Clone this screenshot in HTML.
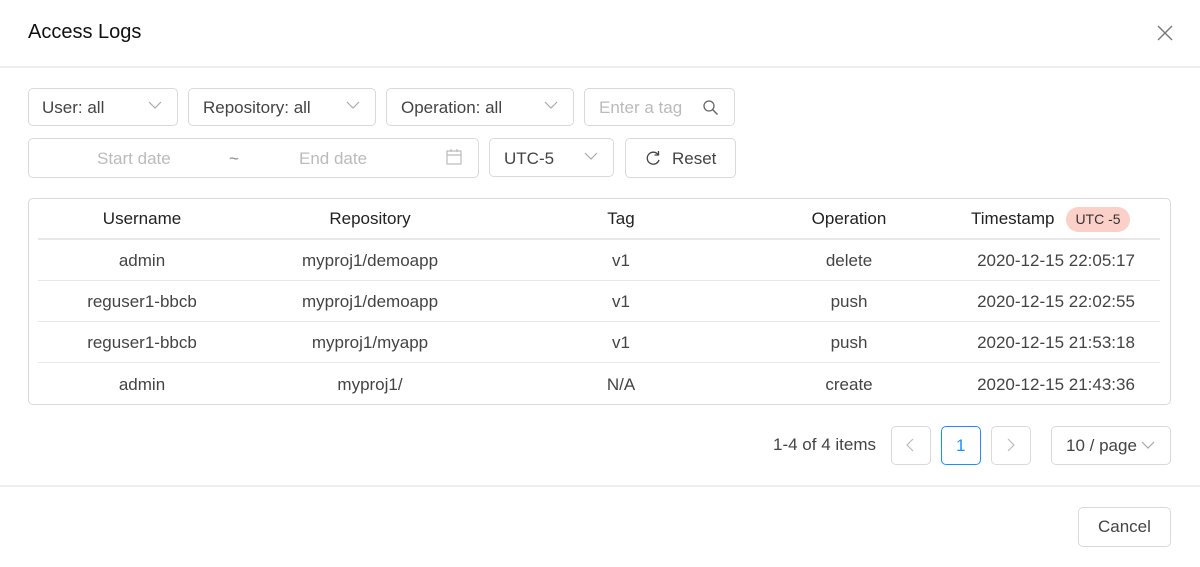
<!DOCTYPE html>
<html><head><meta charset="utf-8"><style>
*{box-sizing:border-box;margin:0;padding:0}
body{width:1200px;height:567px;background:#fff;font-family:"Liberation Sans",Roboto,sans-serif;position:relative;overflow:hidden;color:#444}
.a{position:absolute}
.box{position:absolute;border:1px solid #d9d9d9;border-radius:5px;background:#fff}
.t{position:absolute;font-size:17px;white-space:nowrap}
.hr{position:absolute;height:1px;background:#e8e8e8}
.th{position:absolute;font-size:17px;color:#222;transform:translateX(-50%);white-space:nowrap}
.td{position:absolute;font-size:17px;color:#444;transform:translateX(-50%);white-space:nowrap}
</style></head><body>
<div class="t" style="left:28px;top:21px;font-size:20px;color:#111">Access Logs</div>
<svg class="a" style="left:1157px;top:25px" width="16" height="16" viewBox="0 0 16 16"><path d="M1 1L15 15M15 1L1 15" stroke="#777" stroke-width="1.4"/></svg>
<div class="hr" style="left:0;top:66px;width:1200px;height:2px;background:#eee"></div>

<div class="box" style="left:28px;top:88px;width:150px;height:38px"></div>
<div class="t" style="left:42px;top:98px;color:#444">User: all</div>
<div class="box" style="left:188px;top:88px;width:188px;height:38px"></div>
<div class="t" style="left:203px;top:98px">Repository: all</div>
<div class="box" style="left:386px;top:88px;width:188px;height:38px"></div>
<div class="t" style="left:401px;top:98px">Operation: all</div>
<svg class="a" style="left:148px;top:101px" width="14" height="9"><path d="M1 1L7 7L13 1" fill="none" stroke="#aaa" stroke-width="1.2"/></svg>
<svg class="a" style="left:346px;top:101px" width="14" height="9"><path d="M1 1L7 7L13 1" fill="none" stroke="#aaa" stroke-width="1.2"/></svg>
<svg class="a" style="left:544px;top:101px" width="14" height="9"><path d="M1 1L7 7L13 1" fill="none" stroke="#aaa" stroke-width="1.2"/></svg>
<div class="box" style="left:584px;top:88px;width:151px;height:38px"></div>
<div class="t" style="left:599px;top:98px;color:#bbb">Enter a tag</div>
<svg class="a" style="left:702px;top:99px" width="18" height="18"><circle cx="7" cy="7" r="5" fill="none" stroke="#666" stroke-width="1.3"/><path d="M10.5 10.5L15.5 15.5" stroke="#666" stroke-width="1.4"/></svg>

<div class="box" style="left:28px;top:138px;width:451px;height:40px"></div>
<div class="t" style="left:97px;top:149px;color:#bbb">Start date</div>
<div class="t" style="left:229px;top:149px;color:#888">~</div>
<div class="t" style="left:299px;top:149px;color:#bbb">End date</div>
<svg class="a" style="left:446px;top:148px" width="16" height="18"><rect x="1" y="3" width="14" height="13" fill="none" stroke="#bbb" stroke-width="1.2"/><path d="M1 7H15M5 1V4M11 1V4" stroke="#bbb" stroke-width="1.2"/></svg>
<div class="box" style="left:489px;top:138px;width:125px;height:39px"></div>
<div class="t" style="left:504px;top:149px">UTC-5</div>
<svg class="a" style="left:584px;top:152px" width="14" height="9"><path d="M1 1L7 7L13 1" fill="none" stroke="#aaa" stroke-width="1.2"/></svg>
<div class="box" style="left:625px;top:138px;width:111px;height:40px"></div>
<svg class="a" style="left:645px;top:150px" width="16" height="16"><path d="M13 4.5A6 6 0 1 0 14 10" fill="none" stroke="#444" stroke-width="1.3"/><path d="M13.5 1V5H9.5" fill="none" stroke="#444" stroke-width="1.3"/></svg>
<div class="t" style="left:672px;top:149px">Reset</div>

<div class="box" style="left:28px;top:198px;width:1143px;height:207px"></div>
<div class="th" style="left:142px;top:209px">Username</div>
<div class="th" style="left:370px;top:209px">Repository</div>
<div class="th" style="left:621px;top:209px">Tag</div>
<div class="th" style="left:849px;top:209px">Operation</div>
<div class="t" style="left:971px;top:209px;color:#222">Timestamp</div>
<div class="a" style="left:1066px;top:207px;width:64px;height:25px;border-radius:13px;background:#fbd0c8;font-size:14px;line-height:25px;text-align:center;color:#333">UTC -5</div>
<div class="hr" style="left:38px;top:238px;width:1122px;height:2px"></div>
<div class="hr" style="left:38px;top:280px;width:1122px"></div>
<div class="hr" style="left:38px;top:321px;width:1122px"></div>
<div class="hr" style="left:38px;top:362px;width:1122px"></div>

<div class="td" style="left:142px;top:251px">admin</div><div class="td" style="left:370px;top:251px">myproj1/demoapp</div><div class="td" style="left:621px;top:251px">v1</div><div class="td" style="left:849px;top:251px">delete</div><div class="td" style="left:1056px;top:251px">2020-12-15 22:05:17</div>
<div class="td" style="left:142px;top:292px">reguser1-bbcb</div><div class="td" style="left:370px;top:292px">myproj1/demoapp</div><div class="td" style="left:621px;top:292px">v1</div><div class="td" style="left:849px;top:292px">push</div><div class="td" style="left:1056px;top:292px">2020-12-15 22:02:55</div>
<div class="td" style="left:142px;top:333px">reguser1-bbcb</div><div class="td" style="left:370px;top:333px">myproj1/myapp</div><div class="td" style="left:621px;top:333px">v1</div><div class="td" style="left:849px;top:333px">push</div><div class="td" style="left:1056px;top:333px">2020-12-15 21:53:18</div>
<div class="td" style="left:142px;top:375px">admin</div><div class="td" style="left:370px;top:375px">myproj1/</div><div class="td" style="left:621px;top:375px">N/A</div><div class="td" style="left:849px;top:375px">create</div><div class="td" style="left:1056px;top:375px">2020-12-15 21:43:36</div>

<div class="t" style="left:773px;top:435px">1-4 of 4 items</div>
<div class="box" style="left:891px;top:426px;width:40px;height:39px"></div>
<svg class="a" style="left:905px;top:438px" width="10" height="14"><path d="M8 1L2 7L8 13" fill="none" stroke="#bbb" stroke-width="1.2"/></svg>
<div class="box" style="left:941px;top:426px;width:40px;height:39px;border-color:#1890ff"></div>
<div class="t" style="left:956px;top:436px;color:#1890ff">1</div>
<div class="box" style="left:991px;top:426px;width:40px;height:39px"></div>
<svg class="a" style="left:1006px;top:438px" width="10" height="14"><path d="M2 1L8 7L2 13" fill="none" stroke="#bbb" stroke-width="1.2"/></svg>
<div class="box" style="left:1051px;top:426px;width:120px;height:39px"></div>
<div class="t" style="left:1066px;top:436px">10 / page</div>
<svg class="a" style="left:1141px;top:441px" width="14" height="9"><path d="M1 1L7 7L13 1" fill="none" stroke="#aaa" stroke-width="1.2"/></svg>

<div class="hr" style="left:0;top:485px;width:1200px;height:2px;background:#eee"></div>
<div class="box" style="left:1078px;top:507px;width:93px;height:40px"></div>
<div class="t" style="left:1098px;top:517px">Cancel</div>
</body></html>
